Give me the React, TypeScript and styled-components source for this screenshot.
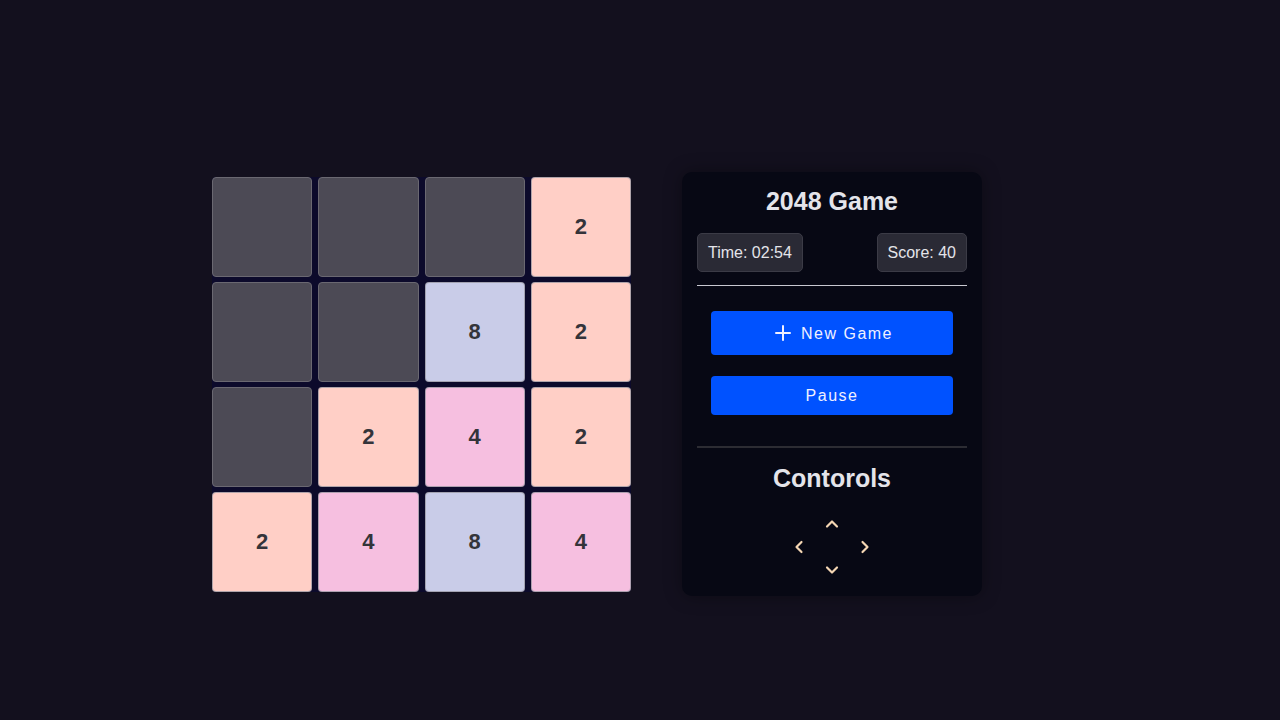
import React from "react";
import styled, { createGlobalStyle } from "styled-components";
import { Plus, ChevronUp, ChevronDown, ChevronLeft, ChevronRight } from "lucide-react";

const Global = createGlobalStyle`
  html, body { margin: 0; padding: 0; background: #13101e; }
  body { font-family: "Liberation Sans", Arial, sans-serif; }
`;

const Page = styled.div`
  min-height: 100vh;
  box-sizing: border-box;
  display: flex;
  gap: 51px;
  padding: 172px 0 0 212px;
  align-items: flex-start;
`;

const Board = styled.div`
  margin-top: 5px;
  display: grid;
  grid-template-columns: repeat(4, 1fr);
  grid-auto-rows: 100px;
  column-gap: 6px;
  row-gap: 5px;
  width: 419px;
  background: #0c0a2b;
  border-radius: 4px;
`;

const tileColors: Record<number, string> = {
  0: "#4c4a55",
  2: "#ffcfc6",
  4: "#f6bfe0",
  8: "#c9cce8",
};

const Tile = styled.div<{ $v: number }>`
  box-sizing: border-box;
  background: ${(p) => tileColors[p.$v]};
  border: 1px solid ${(p) => (p.$v === 0 ? "#6a6871" : "rgba(150,150,160,0.75)")};
  border-radius: 4px;
  display: flex;
  align-items: center;
  justify-content: center;
  font-size: 22px;
  font-weight: bold;
  color: #34343a;
`;

const Panel = styled.div`
  box-sizing: border-box;
  width: 300px;
  height: 424px;
  background: #070814;
  border-radius: 10px;
  box-shadow: 0 0 18px rgba(0, 0, 0, 0.35);
  padding: 15px 15px 0;
  display: flex;
  flex-direction: column;
  align-items: center;
  color: #e4e4ea;
`;

const Title = styled.h2<{ $top?: number }>`
  margin: ${(p) => p.$top ?? 0}px 0 0;
  font-size: 25px;
  font-weight: bold;
  line-height: 28px;
`;

const Stats = styled.div`
  align-self: stretch;
  display: flex;
  justify-content: space-between;
  margin-top: 18px;
`;

const Stat = styled.div`
  background: #2a2a35;
  border: 1px solid #3b3b46;
  border-radius: 5px;
  padding: 9px 10px;
  font-size: 16px;
  line-height: 19px;
  color: #e4e4ea;
`;

const Rule = styled.hr<{ $dark?: boolean; $top: number }>`
  align-self: stretch;
  border: none;
  height: ${(p) => (p.$dark ? "2px" : "1px")};
  background: ${(p) => (p.$dark ? "#2c2c33" : "#c8c8d0")};
  margin: ${(p) => p.$top}px 0 0;
`;

const Button = styled.button<{ $top: number }>`
  width: 242px;
  margin-top: ${(p) => p.$top}px;
  background: #0052ff;
  border: none;
  border-radius: 4px;
  color: #f0f0ff;
  font-family: "Liberation Sans", Arial, sans-serif;
  font-size: 16px;
  letter-spacing: 1.5px;
  padding: 10px;
  line-height: 19px;
  display: flex;
  align-items: center;
  justify-content: center;
  gap: 6px;
  cursor: pointer;
`;

const Arrows = styled.div`
  margin-top: 20px;
  display: grid;
  grid-template-columns: repeat(3, 33px);
  grid-template-rows: repeat(3, 23px);
  color: #f5d7b4;
  justify-items: center;
  align-items: center;
`;

const Cell = styled.div<{ $c: number; $r: number }>`
  grid-column: ${(p) => p.$c};
  grid-row: ${(p) => p.$r};
  display: flex;
`;

const board = [
  [0, 0, 0, 2],
  [0, 0, 8, 2],
  [0, 2, 4, 2],
  [2, 4, 8, 4],
];

export default function App() {
  return (
    <>
      <Global />
      <Page>
        <Board>
          {board.flat().map((v, i) => (
            <Tile key={i} $v={v}>
              {v ? v : ""}
            </Tile>
          ))}
        </Board>
        <Panel>
          <Title>2048 Game</Title>
          <Stats>
            <Stat>Time: 02:54</Stat>
            <Stat>Score: 40</Stat>
          </Stats>
          <Rule $top={13} />
          <Button $top={25}>
            <Plus size={24} strokeWidth={2} />
            New Game
          </Button>
          <Button $top={21}>Pause</Button>
          <Rule $dark $top={31} />
          <Title $top={16}>Contorols</Title>
          <Arrows>
            <Cell $c={2} $r={1}><ChevronUp size={20} strokeWidth={2.6} /></Cell>
            <Cell $c={1} $r={2}><ChevronLeft size={20} strokeWidth={2.6} /></Cell>
            <Cell $c={3} $r={2}><ChevronRight size={20} strokeWidth={2.6} /></Cell>
            <Cell $c={2} $r={3}><ChevronDown size={20} strokeWidth={2.6} /></Cell>
          </Arrows>
        </Panel>
      </Page>
    </>
  );
}
